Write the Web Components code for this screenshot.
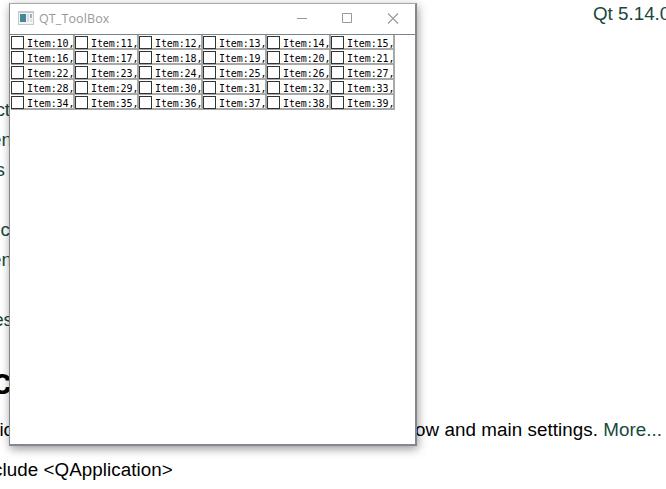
<!DOCTYPE html>
<html lang="en"><head><meta charset="utf-8"><title>QT_ToolBox</title>
<style>html,body{margin:0;width:666px;height:489px;overflow:hidden;background:#fff}</style></head><body>
<desktop-view></desktop-view>
<script>
const define=(name,html,init)=>customElements.define(name,class extends HTMLElement{
  constructor(){super();this.attachShadow({mode:'open'}).innerHTML=html;}
  connectedCallback(){if(init)init(this,this.shadowRoot);}
});

define('doc-line',`<style>
:host{display:flex;height:30px;line-height:30px;white-space:pre;justify-content:flex-end;width:10px}
</style><slot></slot>`);

define('doc-page',`<style>
:host{display:block;position:relative;width:666px;height:489px;overflow:hidden;background:#fff;font:18.8px "Liberation Sans",Arial,sans-serif;color:#000}
.version{display:flex;justify-content:flex-start;height:30px;line-height:30px;padding-left:593px;margin-top:-1px;color:#17483c;white-space:nowrap}
.list{margin-top:66px;color:#17483c}
.gap{height:30px}
.s{width:5px}
.wide{width:12px}
.wider{width:13px}
h1{margin:19px 0 0;display:flex;justify-content:flex-end;width:12px;height:56px;line-height:56px;font-size:37px}
.desc{display:flex;height:30px;line-height:30px;margin-top:5px;white-space:pre}
.desc .rest{margin-left:402px;letter-spacing:.06px}
.desc a{color:#17483c}
.code{display:flex;height:30px;line-height:30px;margin-top:10px;margin-left:-7px;letter-spacing:.06px;white-space:pre}
</style>
<div class="version">Qt 5.14.0</div>
<div class="list"><doc-line>ct</doc-line><doc-line class="wide">en</doc-line><doc-line class="s">s</doc-line><div class="gap"></div><doc-line>c</doc-line><doc-line class="wide">en</doc-line><div class="gap"></div><doc-line class="wider">es</doc-line></div>
<h1>c</h1>
<div class="desc"><doc-line class="wider">ic</doc-line><span class="rest">ow and main settings. <a>More...</a></span></div>
<div class="code">clude &lt;QApplication&gt;</div>`);

define('title-bar',`<style>
:host{display:flex;align-items:center;height:30px;box-sizing:border-box;padding:0 0 0 8px;font:12.5px "Open Sans","Noto Sans",sans-serif;letter-spacing:.12px;color:#999}
svg{display:block;flex:none}
.icon{margin-bottom:2px}
.name{flex:1;margin-left:5px;line-height:20px}
.buttons{display:flex;margin-right:-1px}
</style>
<svg class="icon" width="16" height="14" viewBox="0 0 16 14"><path fill="#c5c9cc" d="M0 0h16v14H0z"/><path fill="#f3f4f5" d="M1 2h14v11H1z"/><path fill="#468795" d="M2 3h6v8H2z"/><path fill="#d5dde2" d="M9 3h2v8H9z"/><path fill="#9ab0c5" d="M12 3h2v4h-2z"/><path fill="#dfe1e3" d="M12 8h2v3h-2z"/></svg>
<span class="name"><slot></slot></span>
<div class="buttons"><svg width="45" height="30" viewBox="0 0 45 30"><path fill="none" stroke="#999" d="M17 14.5h10"/></svg><svg width="45" height="30" viewBox="0 0 45 30"><path fill="none" stroke="#999" d="M17.5 9.5h9v9h-9z"/></svg><svg width="46" height="30" viewBox="0 0 46 30"><path fill="none" stroke="#999" stroke-width="1.1" d="M18 9.5l10 10M28 9.5l-10 10"/></svg></div>`);

define('check-item',`<style>
:host{display:flex;align-items:flex-start;box-sizing:border-box;width:64px;height:15px;border-right:2px solid #a8a8a8;border-bottom:2px solid #a8a8a8;background:#fff}
i{box-sizing:border-box;flex:none;width:13px;height:13px;margin-top:1px;border:1px solid #333;background:#fff}
span{flex:none;margin:1px 0 0 3px;font:10px/15px "DejaVu Sans Mono","Liberation Mono",monospace;letter-spacing:-.1px;color:#000;white-space:pre}
</style><i></i><span><slot></slot></span>`);

define('item-grid',`<style>
:host{display:grid;grid-template-columns:repeat(6,64px);grid-auto-rows:15px}
</style>`,(el,root)=>{
  for(let n=10;n<40;n++){const c=document.createElement('check-item');c.textContent='Item:'+n+',';root.append(c);}
});

define('app-window',`<style>
:host{display:block;box-sizing:border-box;width:408px;height:443px;border:1px solid;border-width:1px 2px 2px 1px;border-color:#aaa #85868f #85868f #85868f;background:#fff;box-shadow:1px 3px 9px rgba(0,0,0,.4)}
.body{border-top:1px solid #78858b;padding:0 0 0 1px}
</style><title-bar>QT_ToolBox</title-bar><div class="body"><slot></slot></div>`);

define('desktop-view',`<style>
:host{display:block;position:relative;width:666px;height:489px;overflow:hidden}
app-window{position:absolute;left:9px;top:3px}
</style><doc-page></doc-page><app-window><item-grid></item-grid></app-window>`);
</script></body></html>
